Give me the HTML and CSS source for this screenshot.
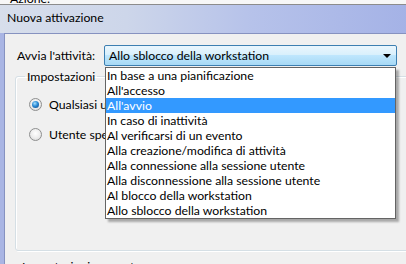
FILE: index.html
```html
<!DOCTYPE html>
<html lang="it">
<head>
  <meta charset="UTF-8" />
  <title>Nuova attivazione</title>
  <link rel="stylesheet" href="styles.css">
</head>
<body>
  <div class="screen">
    <div class="behind"><span>Azione:</span></div>

    <div class="window">
      <div class="titlebar">Nuova attivazione</div>
      <div class="frame">
        <div class="client">
          <div class="row-start">
            <label class="lbl">Avvia l'attività:</label>
            <div class="combo">
              <span>Allo sblocco della workstation</span>
              <span class="arrow"></span>
            </div>
          </div>

          <fieldset class="group">
            <legend>Impostazioni</legend>
            <div class="radio-row">
              <span class="radio checked"></span>
              <span>Qualsiasi utente</span>
            </div>
            <div class="radio-row">
              <span class="radio"></span>
              <span>Utente specifico:</span>
            </div>
          </fieldset>

          <div class="advanced">Impostazioni avanzate</div>

          <ul class="droplist">
            <li>In base a una pianificazione</li>
            <li>All'accesso</li>
            <li class="sel">All'avvio</li>
            <li>In caso di inattività</li>
            <li>Al verificarsi di un evento</li>
            <li>Alla creazione/modifica di attività</li>
            <li>Alla connessione alla sessione utente</li>
            <li>Alla disconnessione alla sessione utente</li>
            <li>Al blocco della workstation</li>
            <li>Allo sblocco della workstation</li>
          </ul>
        </div>
      </div>
    </div>
  </div>
</body>
</html>
```

FILE: styles.css
```css
* { box-sizing: border-box; margin: 0; padding: 0; }
html, body {
  width: 406px;
  height: 264px;
  overflow: hidden;
  background: #f0f0f0;
}
body {
  font-family: 'Lato', 'Open Sans', sans-serif;
  font-size: 12.25px;
  color: #000;
}
.screen {
  display: flex;
  flex-direction: column;
  width: 406px;
  height: 264px;
}
.behind {
  flex: none;
  height: 5px;
  overflow: hidden;
  background: #f7f7f7;
  border-bottom: 1px solid #8c8c8c;
  padding-left: 10px;
}
.behind span {
  display: block;
  margin-top: -7px;
  line-height: 12px;
}
.window {
  flex: 1;
  display: flex;
  flex-direction: column;
  width: 420px;
}
.titlebar {
  flex: none;
  height: 28px;
  padding: 5px 0 0 7px;
  line-height: 16px;
  background: linear-gradient(90deg, #d7deeb 0%, #cdd6ea 30%, #b6c2ea 60%, #a3b1e6 100%);
}
.frame {
  flex: 1;
  background: #a9b5e4;
  padding-left: 4px;
}
.client {
  position: relative;
  height: 100%;
  background: #f0f0f0;
  border-left: 1px solid #8692c0;
  border-top: 1px solid #8692c0;
  padding: 11px 0 0 12px;
}
.row-start {
  display: flex;
  align-items: center;
}
.lbl {
  width: 87px;
}
.combo {
  width: 293px;
  height: 21px;
  display: flex;
  align-items: center;
  justify-content: space-between;
  padding: 0 4px 0 4px;
  border: 1px solid #3c7fb1;
  border-radius: 2px;
  background: linear-gradient(180deg, #eaf6fd 0%, #d9f0fc 45%, #bee6fd 50%, #a7d9f5 100%);
}
.arrow {
  width: 0;
  height: 0;
  border-left: 4px solid transparent;
  border-right: 4px solid transparent;
  border-top: 4px solid #000;
  margin-right: 1px;
}
.group {
  margin: 3px 0 0 -2px;
  width: 420px;
  height: 182px;
  border: 1px solid #d5dfe5;
  box-shadow: inset 1px 1px 0 #fff, 1px 1px 0 #fff;
  border-radius: 3px;
  padding: 13px 0 0 13px;
}
.group legend {
  margin-left: -4px;
  padding: 0 2px;
}
.radio-row {
  display: flex;
  align-items: center;
  gap: 7px;
  height: 15px;
  margin-bottom: 15px;
}
.radio {
  width: 13px;
  height: 13px;
  border-radius: 50%;
  border: 1px solid #8e8f8f;
  background: radial-gradient(circle at 50% 40%, #ffffff 0%, #eeeeee 50%, #d4d4d4 100%);
  display: flex;
  align-items: center;
  justify-content: center;
}
.radio.checked::after {
  content: '';
  width: 7px;
  height: 7px;
  border-radius: 50%;
  background: radial-gradient(circle at 40% 35%, #a6e0ff 0%, #2a8ad4 45%, #0b3f7e 100%);
}
.advanced {
  margin: 8px 0 0 5px;
}
.droplist {
  position: absolute;
  left: 100px;
  top: 33px;
  width: 291px;
  height: 152px;
  list-style: none;
  background: #fff;
  border: 1px solid #646464;
  box-shadow: 3px 3px 2px rgba(0, 0, 0, 0.3);
}
.droplist li {
  height: 15px;
  line-height: 15px;
  padding-left: 1px;
  white-space: nowrap;
}
.droplist li.sel {
  background: #3399ff;
  color: #fff;
}
```
